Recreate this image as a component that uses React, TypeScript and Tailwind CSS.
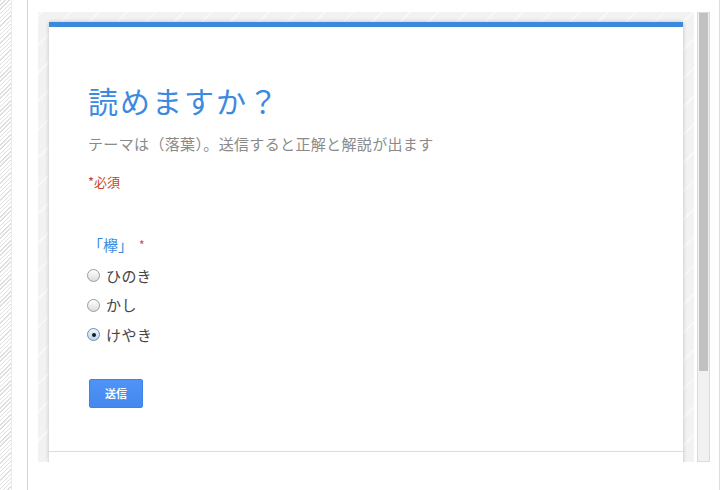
import React from "react";

function Radio({ checked }: { checked?: boolean }) {
  return checked ? (
    <span className="w-[13px] h-[13px] rounded-full border border-[#6a8cb5] bg-[linear-gradient(#eef6fd,#b9d7f3)] flex items-center justify-center shrink-0">
      <span className="w-[4px] h-[4px] rounded-full bg-[#1a1a1a]" />
    </span>
  ) : (
    <span className="w-[13px] h-[13px] rounded-full border border-[#9b9b9b] bg-[linear-gradient(#ffffff,#dcdcdc)] shrink-0" />
  );
}

export default function App() {
  const opts = [
    { label: "ひのき", checked: false },
    { label: "かし", checked: false },
    { label: "けやき", checked: true },
  ];
  return (
    <div
      className="w-[721px] h-[490px] flex bg-white overflow-hidden"
      style={{ fontFamily: '"Noto Sans CJK JP", "Noto Sans", sans-serif' }}
    >
      <div className="w-[12px] h-full shrink-0 border-r border-[#ececec] bg-[repeating-linear-gradient(-45deg,#ffffff_0px,#ffffff_2px,#dedede_2px,#dedede_3px)]" />
      <div className="w-[15px] h-full shrink-0" />
      <div className="w-[11px] h-full shrink-0 border-l border-[#d6d6d6]" />
      <div className="pt-[12px] shrink-0">
        <div className="w-[656px] h-[450px] overflow-hidden px-[11px] pt-[10px] bg-[#f3f3f3] bg-[repeating-linear-gradient(-45deg,#f2f2f2_0px,#f2f2f2_18px,#f8f8f8_18px,#f8f8f8_20px)]">
          <div className="w-[634px] bg-white border-t-[5px] border-[#3b89dd] shadow-[0_0_4px_rgba(0,0,0,0.22)]">
            <div className="h-[425px] border-b border-[#dcdcdc] pl-[39px] pt-[55px] flex flex-col">
              <h1 className="text-[30px] leading-[36px] tracking-[2px] text-[#3b8ae0] font-normal">読めますか？</h1>
              <p className="mt-[16px] text-[15px] leading-[20px] tracking-[0.35px] text-[#8a8a8a]">テーマは（落葉）。送信すると正解と解説が出ます</p>
              <p className="mt-[19px] text-[13px] leading-[18px] text-[#c4452b]">*必須</p>
              <div className="mt-[44px] text-[15px] leading-[20px] text-[#3b8ae0] flex items-center">
                <span>「欅」</span>
                <span className="ml-[6px] text-[12px] text-[#d6493a]">*</span>
              </div>
              <div className="mt-[6px] flex flex-col">
                {opts.map((o) => (
                  <div key={o.label} className="h-[29.5px] flex items-center -ml-[1px] gap-[6px]">
                    <Radio checked={o.checked} />
                    <span className="text-[15px] leading-[20px] tracking-[0.5px] text-[#444444]">{o.label}</span>
                  </div>
                ))}
              </div>
              <div className="mt-[29px] ml-[1px]">
                <button className="w-[54px] h-[29px] rounded-[2px] border border-[#3f82ea] bg-[linear-gradient(#4f93f7,#4688ee)] text-white text-[11px] font-bold flex items-center justify-center">
                  送信
                </button>
              </div>
            </div>
            <div className="h-[40px] bg-white" />
          </div>
        </div>
      </div>
      <div className="w-[3px] shrink-0" />
      <div className="pt-[12px] shrink-0">
        <div className="w-[13px] h-[450px] border border-[#dadada] bg-[#f1f1f1] px-[1px] pt-0">
          <div className="w-[9px] h-[358px] bg-[#c1c1c1]" />
        </div>
      </div>
      <div className="w-[9px] shrink-0" />
      <div className="w-[1px] h-full bg-[#dddddd] shrink-0" />
    </div>
  );
}
